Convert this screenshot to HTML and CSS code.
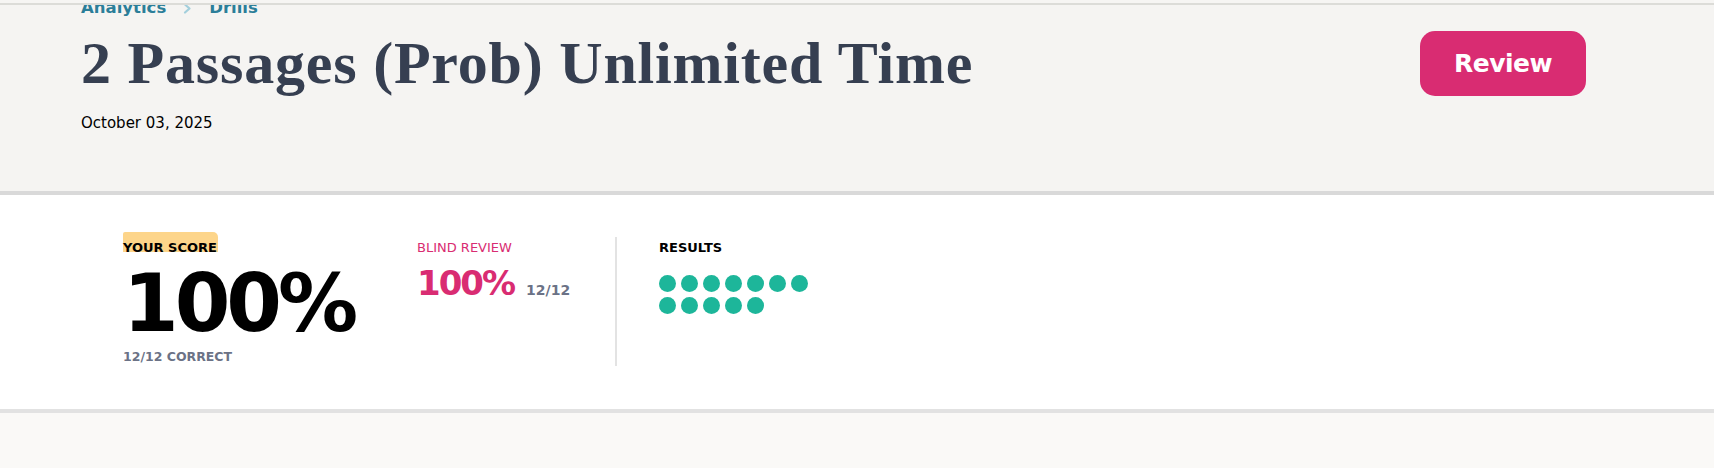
FILE: index.html
```html
<!DOCTYPE html>
<html>
<head>
<meta charset="utf-8">
<link rel="stylesheet" href="styles.css">
</head>
<body>
<div class="topbar"></div>
<header class="hero">
  <div class="hero-main">
    <nav class="crumbs"><a class="crumb">Analytics</a><svg class="sep" width="9" height="11" viewBox="0 0 9 11"><path d="M2 1.5 L6.5 5.5 L2 9.5" fill="none" stroke="#a3cfdc" stroke-width="2.2" stroke-linecap="round" stroke-linejoin="round"/></svg><a class="crumb">Drills</a></nav>
    <h1 class="title">2 Passages (Prob) Unlimited Time</h1>
    <div class="date">October 03, 2025</div>
  </div>
  <button class="review-btn">Review</button>
</header>
<section class="scores">
  <div class="col col-score">
    <div class="label"><span class="hl">YOUR SCORE</span></div>
    <div class="big">100%</div>
    <div class="sub">12/12 CORRECT</div>
  </div>
  <div class="col col-blind">
    <div class="label pink">BLIND REVIEW</div>
    <div class="mid"><span class="mid-val">100%</span><span class="mid-frac">12/12</span></div>
  </div>
  <div class="divider"></div>
  <div class="col col-results">
    <div class="label">RESULTS</div>
    <div class="dots">
      <span class="dot"></span><span class="dot"></span><span class="dot"></span><span class="dot"></span><span class="dot"></span><span class="dot"></span><span class="dot"></span>
      <span class="dot"></span><span class="dot"></span><span class="dot"></span><span class="dot"></span><span class="dot"></span>
    </div>
  </div>
</section>
<div class="rest"></div>
</body>
</html>
```
FILE: styles.css
```css
* { box-sizing: border-box; }
html, body { margin: 0; padding: 0; }
body {
  background: #faf9f7;
  font-family: "DejaVu Sans", "Noto Sans", sans-serif;
  color: #000;
  overflow: hidden;
}
.topbar {
  position: fixed;
  top: 0; left: 0; right: 0;
  height: 5px;
  background: #f6f5f3;
  border-bottom: 2px solid #dcdcd8;
  z-index: 10;
}
.hero {
  height: 195px;
  background: #f5f4f2;
  border-bottom: 4px solid #d9d9d9;
  display: flex;
  justify-content: space-between;
  align-items: flex-start;
  padding: 0 128px 0 81px;
}
.hero-main { display: flex; flex-direction: column; }
.crumbs {
  display: flex;
  align-items: center;
  margin-top: -2px;
  font-size: 16.5px;
  font-weight: 700;
  line-height: 20px;
  color: #2b7e99;
}
.crumb { color: #2b7e99; }
.sep { margin: 0 17px 0 17px; }
.title {
  margin: 12px 0 0 0;
  font-family: "Liberation Serif", "DejaVu Serif", serif;
  font-weight: 700;
  font-size: 60px;
  line-height: 66px;
  color: #363f51;
  letter-spacing: 0.8px;
}
.date {
  margin-top: 18px;
  font-size: 15px;
  line-height: 18px;
  color: #000;
}
.review-btn {
  margin-top: 31px;
  width: 166px;
  height: 65px;
  border: none;
  border-radius: 15px;
  background: #d92c72;
  color: #fff;
  font-family: "DejaVu Sans", sans-serif;
  font-weight: 700;
  font-size: 25px;
  letter-spacing: -0.5px;
}
.scores {
  height: 218px;
  background: #fff;
  border-bottom: 4px solid #e2e2e2;
  display: flex;
  align-items: flex-start;
  padding: 45px 0 0 123px;
}
.col { display: flex; flex-direction: column; }
.col-score { width: 294px; }
.col-blind { width: 198px; }
.label {
  font-size: 13px;
  font-weight: 700;
  line-height: 16px;
}
.hl {
  display: inline-block;
  margin-top: -8px;
  padding: 8px 1px 0 0;
  background: linear-gradient(to bottom, #fdd58a 0, #fdd58a 20px, transparent 20px);
  border-radius: 2px 5px 0 3px;
}
.pink { color: #d92c72; font-weight: 400; }
.big {
  font-size: 80px;
  font-weight: 700;
  line-height: 80px;
  margin-top: 8px;
  letter-spacing: -4px;
}
.sub {
  margin-top: 5px;
  font-size: 12.5px;
  line-height: 16px;
  font-weight: 700;
  color: #6b7286;
}
.mid { display: flex; align-items: baseline; margin-top: 7px; }
.mid-val {
  font-size: 34px;
  font-weight: 700;
  color: #d92c72;
  line-height: 40px;
  letter-spacing: -2px;
}
.mid-frac {
  margin-left: 12px;
  font-size: 14px;
  font-weight: 700;
  color: #6b7286;
}
.divider {
  width: 2px;
  height: 129px;
  margin-top: -3px;
  background: #e3e3e3;
}
.col-results { margin-left: 42px; }
.dots {
  display: flex;
  flex-wrap: wrap;
  gap: 5px;
  width: 152px;
  margin-top: 19px;
}
.dot {
  width: 17px;
  height: 17px;
  border-radius: 50%;
  background: #1db69a;
}
.rest { height: 60px; }
```
